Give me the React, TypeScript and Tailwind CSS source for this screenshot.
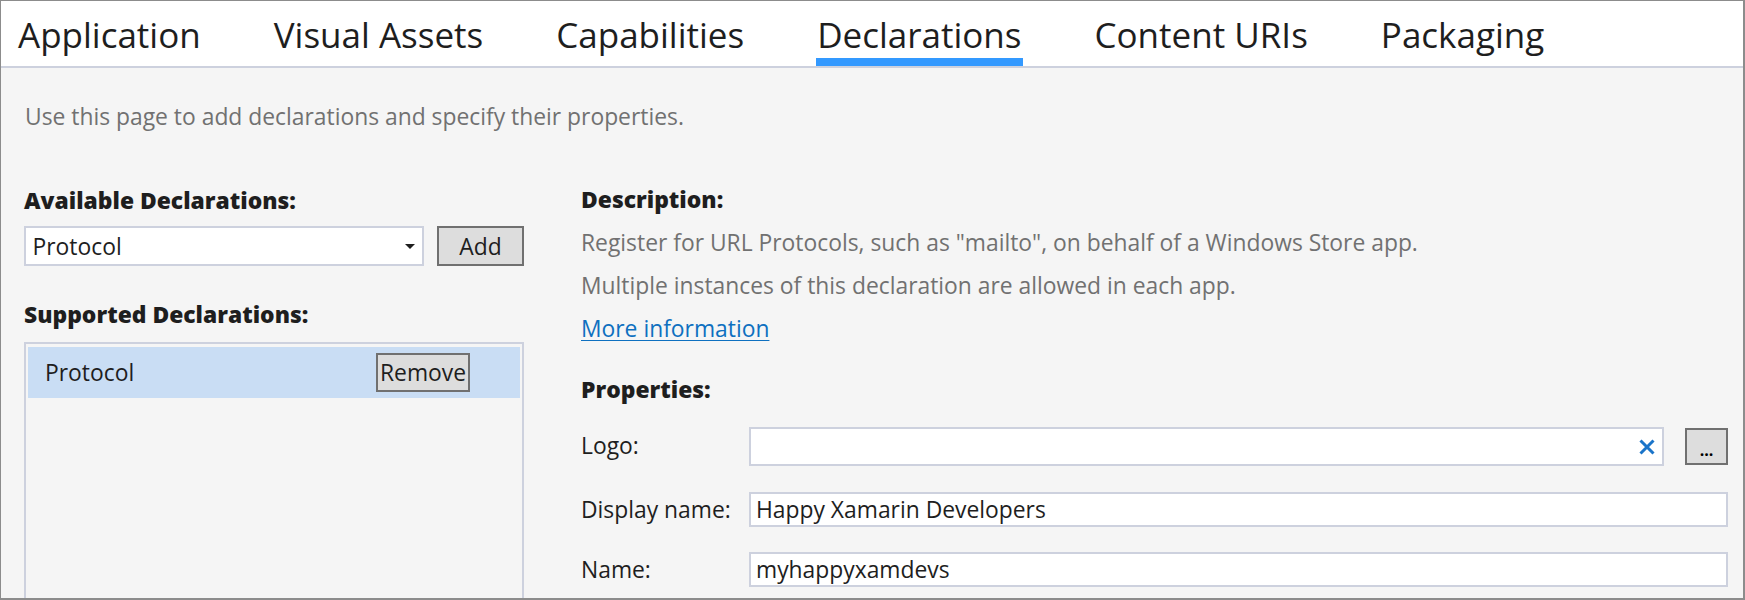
import React from "react";

const TABS = ["Application", "Visual Assets", "Capabilities", "Declarations", "Content URIs", "Packaging"];
const ACTIVE = "Declarations";

function TabBar() {
  return (
    <div className="flex h-[67px] shrink-0 gap-[73px] border-b-2 border-[#cdd1de] bg-white pl-[17px]">
      {TABS.map((t) => (
        <div key={t} className="relative h-[65px] pt-[10px] text-[35px] leading-[48px] text-[#1e1e1e]">
          {t}
          {t === ACTIVE && <span className="absolute -inset-x-px bottom-0 h-[8px] bg-[#3399ff]" />}
        </div>
      ))}
    </div>
  );
}

function GrayButton({ label, className }: { label: string; className: string }) {
  return (
    <div
      className={
        "flex shrink-0 items-center justify-center border-2 border-[#707070] bg-[#dddddd] leading-[30px] text-[#1e1e1e] " +
        className
      }
    >
      {label}
    </div>
  );
}

function LeftPane() {
  return (
    <div className="flex w-[500px] shrink-0 flex-col">
      <div className="mt-[53.5px] font-extrabold leading-[30px] text-[#1e1e1e]">Available Declarations:</div>
      <div className="mt-[10.5px] flex h-[40px] gap-[13px]">
        <div className="flex w-[400px] items-center justify-between border-2 border-[#cdd1de] bg-white pl-[6.5px] pr-[7px] leading-[30px] text-[#1e1e1e]">
          <span className="pt-[2px]">Protocol</span>
          <svg width="10" height="5" viewBox="0 0 10 5">
            <polygon points="0,0 10,0 5,5" fill="#1e1e1e" />
          </svg>
        </div>
        <GrayButton label="Add" className="h-[40px] w-[87px] pt-[1px]" />
      </div>
      <div className="mt-[34px] font-extrabold leading-[30px] text-[#1e1e1e]">Supported Declarations:</div>
      <div className="mt-[12px] h-[300px] border-2 border-[#cdd1de] px-[2px] pt-[3px]">
        <div className="flex h-[51px] items-center justify-between bg-[#c9ddf4] pl-[17px] pr-[50px] leading-[30px] text-[#1e1e1e]">
          <span className="pt-[1px]">Protocol</span>
          <GrayButton label="Remove" className="h-[39px] w-[94px]" />
        </div>
      </div>
    </div>
  );
}

function Field({ value }: { value: string }) {
  return (
    <div className="flex h-[35px] flex-1 items-center border-2 border-[#cdd1de] bg-white pl-[5px] pt-[1px] leading-[30px] text-[#1e1e1e]">
      {value}
    </div>
  );
}

function RightPane() {
  return (
    <div className="ml-[57px] flex w-[1147px] shrink-0 flex-col">
      <div className="mt-[46px] font-extrabold leading-[43px] text-[#1e1e1e]">Description:</div>
      <div className="leading-[43px] text-[#717171]">
        Register for URL Protocols, such as "mailto", on behalf of a Windows Store app.
      </div>
      <div className="leading-[43px] text-[#717171]">Multiple instances of this declaration are allowed in each app.</div>
      <div className="leading-[43px]">
        <span className="text-[#0e70c0] underline decoration-1 underline-offset-[3px]">More information</span>
      </div>
      <div className="mt-[18px] font-extrabold leading-[43px] text-[#1e1e1e]">Properties:</div>

      <div className="mt-[16px] flex h-[39px] items-center">
        <div className="w-[168px] shrink-0 pb-[1px] leading-[30px] text-[#1e1e1e]">Logo:</div>
        <div className="flex h-[39px] w-[915px] items-center justify-end border-2 border-[#cdd1de] bg-white pr-[7px]">
          <svg width="16" height="16" viewBox="0 0 16 16">
            <path d="M1.5 1.5 L14.5 14.5 M14.5 1.5 L1.5 14.5" stroke="#1a74c9" strokeWidth="3" fill="none" />
          </svg>
        </div>
        <div className="ml-[21px] flex h-[37px] w-[43px] items-center justify-center border-2 border-[#707070] bg-[#dddddd] pt-[6px] text-[16px] font-bold leading-[16px] text-black">
          ...
        </div>
      </div>

      <div className="mt-[26px] flex h-[35px] items-center">
        <div className="w-[168px] shrink-0 pt-[1px] leading-[30px] text-[#1e1e1e]">Display name:</div>
        <Field value="Happy Xamarin Developers" />
      </div>

      <div className="mt-[25px] flex h-[35px] items-center">
        <div className="w-[168px] shrink-0 pt-[1px] leading-[30px] text-[#1e1e1e]">Name:</div>
        <Field value="myhappyxamdevs" />
      </div>
    </div>
  );
}

export default function App() {
  return (
    <div className="flex h-[600px] w-[1745px] flex-col overflow-hidden border-l border-t border-r-2 border-b-2 border-[#8c8c8c] bg-[#f5f5f5] font-['Open_Sans',sans-serif] text-[22.85px]">
      <TabBar />
      <div className="mt-[34px] pl-[24px] leading-[30px] text-[#717171]">
        Use this page to add declarations and specify their properties.
      </div>
      <div className="flex pl-[23px]">
        <LeftPane />
        <RightPane />
      </div>
    </div>
  );
}
